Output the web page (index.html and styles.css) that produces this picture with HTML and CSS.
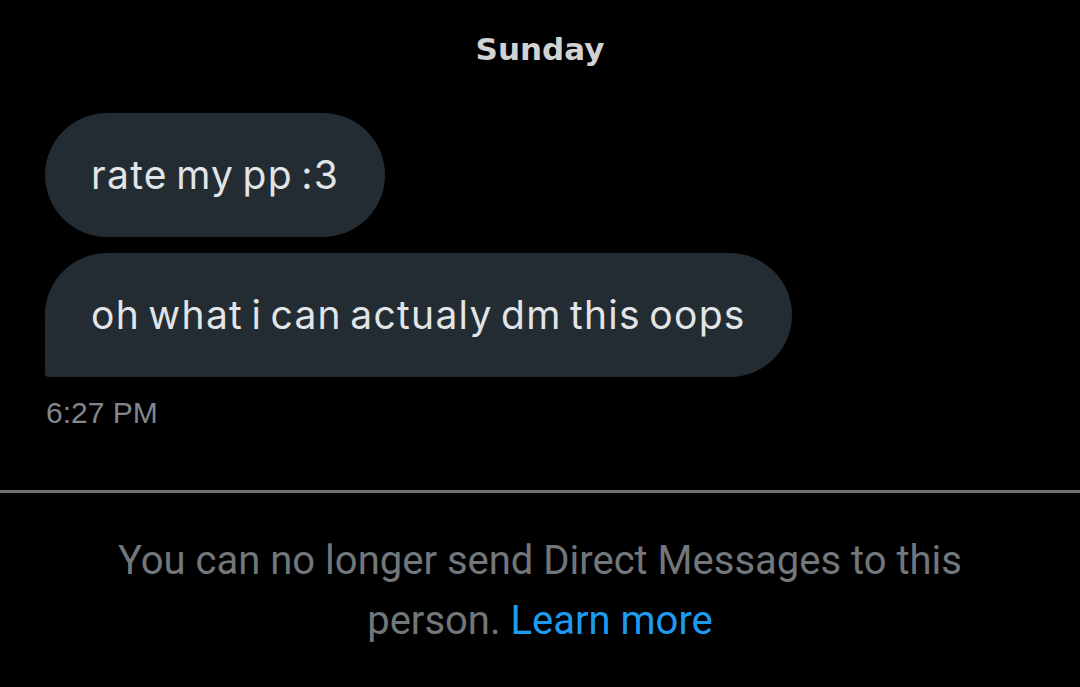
FILE: index.html
```html
<!DOCTYPE html>
<html>
  <head>
    <title>Messages</title>
    <meta charset="utf-8" />
    <link rel="stylesheet" href="styles.css">
  </head>
  <body>
    <div class="chat">
      <div class="day">Sunday</div>
      <div class="thread">
        <div class="bubble first">rate my pp :3</div>
        <div class="bubble last">oh what i can actualy dm this oops</div>
        <div class="time">6:27 PM</div>
      </div>
    </div>
    <div class="notice">
      <p>
        You can no longer send Direct Messages to this person.
        <a href="#" class="learn">Learn more</a>
      </p>
    </div>
  </body>
</html>
```
FILE: styles.css
```css
body {
  margin: 0;
  background: #000;
  width: 1080px;
  height: 687px;
  overflow: hidden;
}
.chat {
  height: 490px;
  border-bottom: 3px solid #6c7275;
}
.day {
  font-family: "DejaVu Sans", sans-serif;
  font-weight: bold;
  font-size: 31px;
  color: #d0d2d3;
  text-align: center;
  padding-top: 31px;
  line-height: 36px;
}
.thread {
  padding: 46px 0 0 45px;
  display: flex;
  flex-direction: column;
  align-items: flex-start;
  gap: 16px;
}
.bubble {
  background: #232c33;
  color: #e2e5e7;
  font-family: Inter, sans-serif;
  font-size: 39px;
  letter-spacing: 1.3px;
  word-spacing: -4px;
  line-height: 48px;
  padding: 38px 46px 38px 46px;
  border-radius: 62px;
}
.bubble.last {
  border-bottom-left-radius: 4px;
}
.time {
  font-family: "Liberation Sans", sans-serif;
  font-size: 30px;
  color: #81878c;
  margin-top: 3px;
  padding-left: 1px;
}
.notice {
  padding: 0 100px;
  text-align: center;
}
.notice p {
  margin: 38px 0 0 0;
  font-family: Roboto, sans-serif;
  font-size: 40px;
  line-height: 60px;
  color: #71777b;
}
.learn {
  color: #1d9bf0;
  text-decoration: none;
}
```
